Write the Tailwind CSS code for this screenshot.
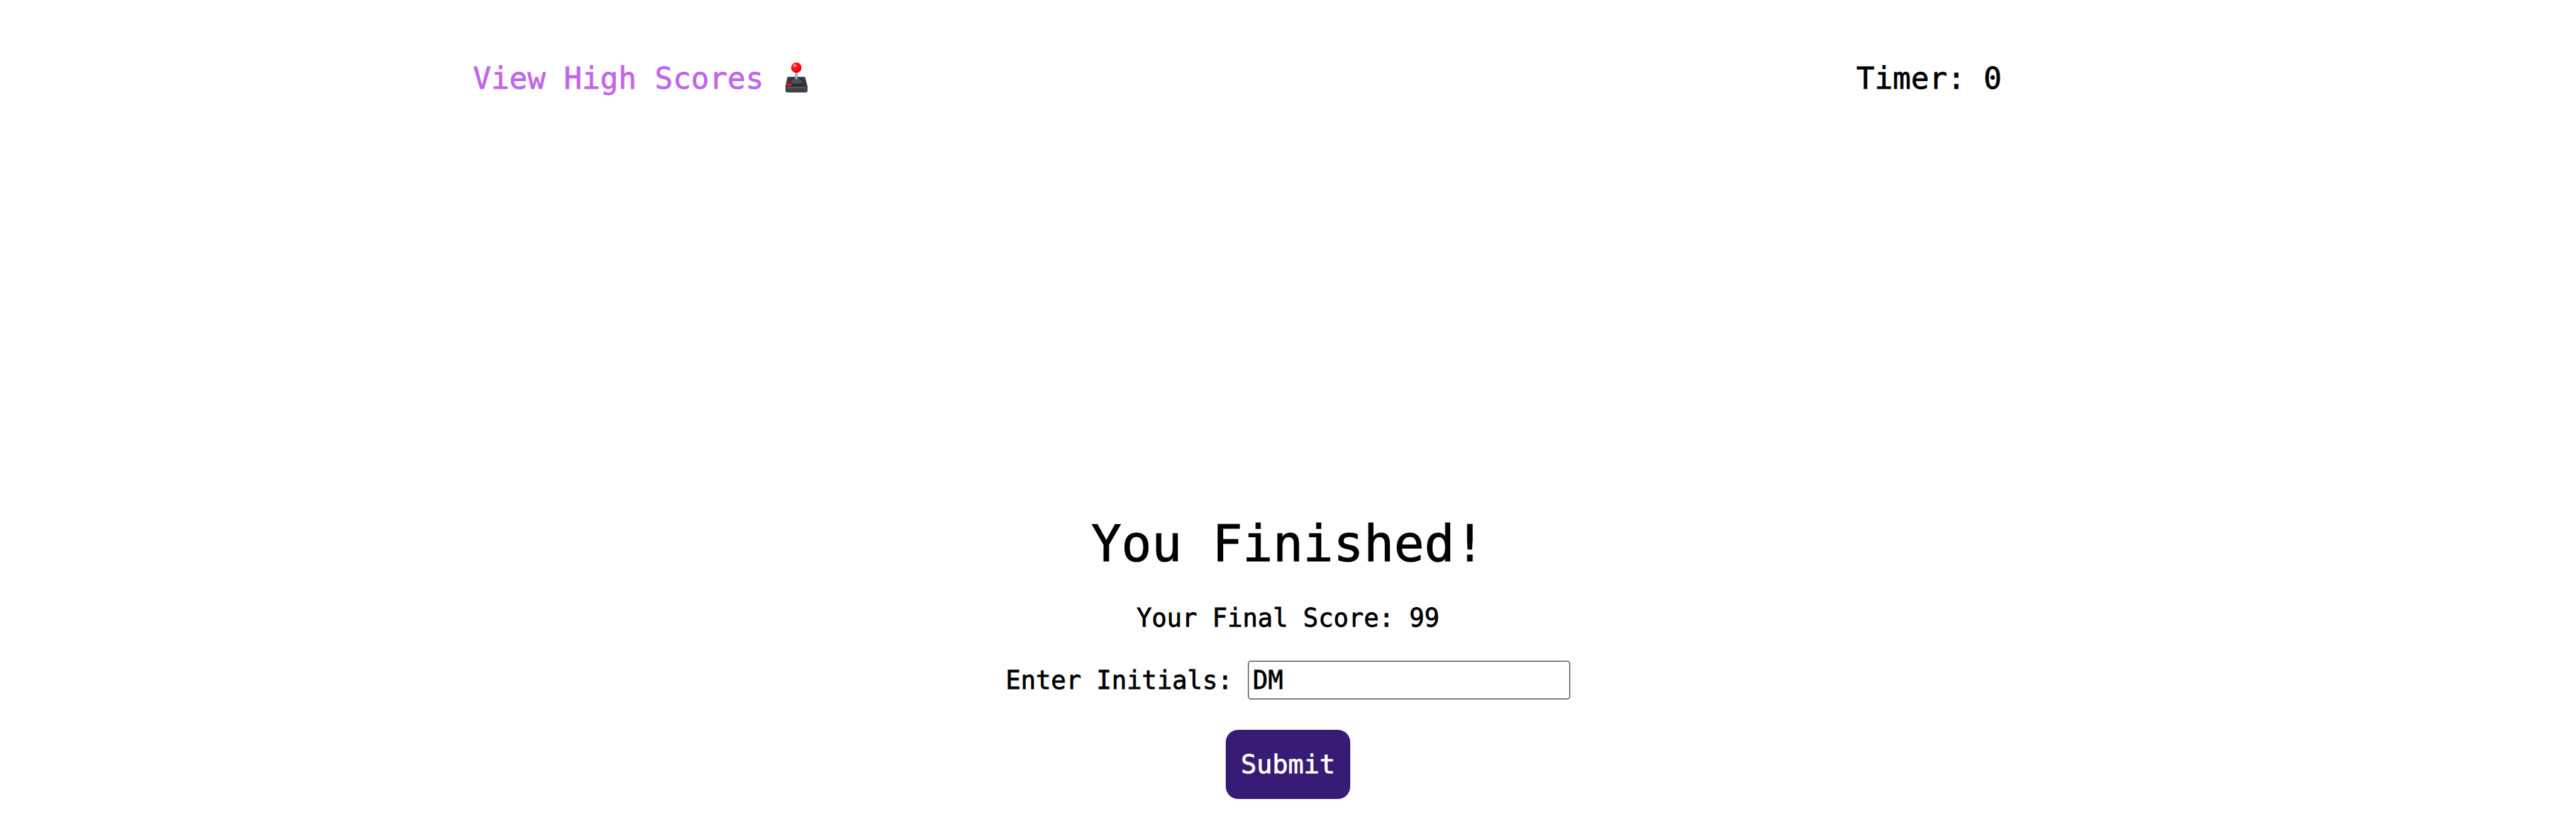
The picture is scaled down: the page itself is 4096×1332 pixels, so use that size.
<!DOCTYPE html>
<html lang="en"><head><meta charset="utf-8"><title>Quiz</title><script src="https://cdn.jsdelivr.net/npm/@tailwindcss/browser@4"></script></head>
<body class="bg-white text-black font-['DejaVu_Sans_Mono',monospace] [-webkit-text-stroke:0.8px]">
<div class="flex flex-col">
<header class="flex justify-between pt-[96px] pl-[752px] pr-[913px] text-[48px] leading-[56px]">
<a class="flex text-[#c265eb]"><span>View High Scores</span>
<svg class="w-[38px] h-[50px] ml-[33px] mt-[2px]" viewBox="0 0 38 50">
<defs><linearGradient id="shaft"><stop stop-color="#555"/><stop offset=".45" stop-color="#eee"/><stop offset="1" stop-color="#555"/></linearGradient>
<radialGradient id="ball" cx=".35" cy=".3" r=".75"><stop stop-color="#ffb8b8"/><stop offset=".3" stop-color="#ff1520"/><stop offset=".75" stop-color="#fb000c"/><stop offset="1" stop-color="#c90008"/></radialGradient>
<linearGradient id="base" x2="0" y2="1"><stop stop-color="#41484e"/><stop offset="1" stop-color="#2b3035"/></linearGradient></defs>
<path d="M5 25Q5.500 24 7 24H31Q33 24 33.500 26L37 40V46Q37 49 34 49H5Q2 49 2 46V40Z" fill="#30363b"/>
<path d="M5 25Q5.500 24 7 24H31Q33 24 33.500 26L36.500 39Q36.500 40.500 35 40.500H4Q2 40.500 2.300 38.500Z" fill="url(#base)"/>
<path d="M2.500 41H36.500V45Q36 48.500 33.500 48.500H5.500Q3 48.500 2.500 45Z" fill="#3d4349"/>
<path d="M4 41.200H35" stroke="#7d8286"/>
<ellipse cx="19.500" cy="31.500" rx="11.500" ry="5.800" fill="#23282c"/>
<path d="M9 31Q15 29 16 25H23Q24 29 30 31Q28 35.500 19.500 35.500Q11 35.500 9 31Z" fill="#4b5157"/>
<rect x="17.500" y="15" width="3.500" height="13" rx="1" fill="url(#shaft)"/>
<circle cx="19.200" cy="9.500" r="8.300" fill="url(#ball)"/>
<ellipse cx="8" cy="36.500" rx="4" ry="2.700" fill="#ed111a"/>
</svg></a>
<div>Timer: 0</div></header>
<main class="flex flex-col items-center pt-[666px]">
<h1 class="text-[80px] leading-[94px] [-webkit-text-stroke:1px]">You Finished!</h1>
<p class="text-[40px] leading-[48px] mt-[46px]">Your Final Score: 99</p>
<div class="flex items-center mt-[44px] text-[40px]"><label>Enter Initials:</label><input value="DM" class="w-[513px] h-[62px] ml-6 px-[6px] text-[40px] border-2 border-[#767676] rounded-[5px]"></div>
<button class="mt-[48px] w-[198px] h-[110px] rounded-[20px] bg-[#371b75] text-white text-[41.6px]">Submit</button>
</main></div></body></html>
